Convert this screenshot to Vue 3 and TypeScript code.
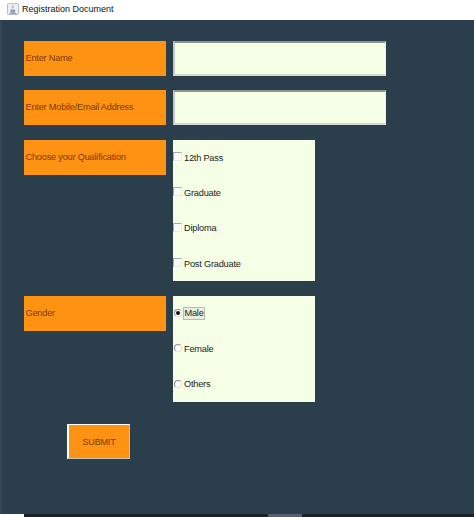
<script setup lang="ts">
const qualifications: string[] = ['12th Pass', 'Graduate', 'Diploma', 'Post Graduate']
const genders: string[] = ['Male', 'Female', 'Others']
</script>

<template>
  <div class="window">
    <header class="titlebar">
      <svg class="app-icon" width="12" height="12" viewBox="0 0 14 14">
        <rect x="0.5" y="0.5" width="13" height="13" rx="1.5" fill="#eceef2" stroke="#a9adb5" />
        <path d="M3 11.5h8v1H3z" fill="#7d8fb0" />
        <path d="M4 7.5h5.5v3a1 1 0 0 1-1 1H5a1 1 0 0 1-1-1z" fill="#8d9dbb" />
        <path d="M6.8 2.5c1 1.3-.9 2 .1 3.6" fill="none" stroke="#c9743a" stroke-width="1" />
      </svg>
      <span class="title">Registration Document</span>
    </header>

    <main class="content">
      <div class="row">
        <div class="label">Enter Name</div>
        <div class="input"></div>
      </div>
      <div class="row">
        <div class="label">Enter Mobile/Email Address</div>
        <div class="input"></div>
      </div>
      <div class="row row-qual">
        <div class="label">Choose your Qualification</div>
        <div class="panel panel-check">
          <div v-for="q in qualifications" :key="q" class="option">
            <span class="check"></span>
            <span class="option-text">{{ q }}</span>
          </div>
        </div>
      </div>
      <div class="row row-gender">
        <div class="label">Gender</div>
        <div class="panel panel-radio">
          <div v-for="(g, i) in genders" :key="g" class="option">
            <span class="radio" :class="{ on: i === 0 }"></span>
            <span class="option-text" :class="{ focus: i === 0 }">{{ g }}</span>
          </div>
        </div>
      </div>
      <button class="submit" type="button">SUBMIT</button>
    </main>

    <footer class="taskbar">
      <span class="task-white"></span>
      <span class="task-gray"></span>
    </footer>
  </div>
</template>

<style>
html, body { margin: 0; background: #2a3e4b; }
</style>

<style scoped>
.window {
  width: 474px;
  height: 517px;
  display: flex;
  flex-direction: column;
  overflow: hidden;
  font-family: "Liberation Sans", Arial, sans-serif;
}
.titlebar {
  height: 20px;
  flex: none;
  background: #fff;
  display: flex;
  align-items: center;
  padding-left: 7px;
  gap: 3px;
  box-sizing: border-box;
}
.app-icon { flex: none; margin-top: -2px; }
.title {
  font-size: 9px;
  color: #111;
  margin-top: -2px;
}
.content {
  flex: 1;
  min-height: 0;
  background: #2a3e4b;
  border-left: 2px solid #33475a;
  box-sizing: border-box;
  padding: 21px 0 0 22px;
  display: flex;
  flex-direction: column;
  align-items: flex-start;
}
.row {
  display: flex;
  align-items: flex-start;
  gap: 7px;
  margin-bottom: 14px;
}
.row-qual { margin-top: 1px; margin-bottom: 15px; }
.row-gender { margin-bottom: 22px; }
.label {
  width: 142px;
  height: 35px;
  background: #fe9212;
  color: #7a3c08;
  font-size: 9.2px;
  letter-spacing: -0.2px;
  line-height: 35px;
  padding-left: 1.5px;
  box-sizing: border-box;
  white-space: nowrap;
}
.input {
  width: 213px;
  height: 35px;
  box-sizing: border-box;
  background: #f4ffe6;
  border-top: 2px solid #8b9593;
  border-left: 2px solid #c2c9c8;
  border-right: 1px solid #eef3e6;
  border-bottom: 2px solid #d6dad6;
}
.panel {
  width: 142px;
  background: #f4ffe6;
}
.panel-check { height: 141px; }
.panel-radio { height: 106px; }
.option {
  display: flex;
  align-items: center;
  height: 35.3px;
  font-size: 9.2px;
  letter-spacing: -0.2px;
  color: #1c1c1c;
}
.check {
  width: 9px;
  height: 9px;
  flex: none;
  box-sizing: border-box;
  background: #fafafa;
  border: 1px solid #a8aab0;
  border-right-color: #ececec;
  border-bottom-color: #ececec;
  margin-top: -2px;
}
.option-text { margin-left: 1px; white-space: nowrap; }
.panel-check .option-text { margin-left: 2px; }
.radio {
  width: 8px;
  height: 8px;
  flex: none;
  box-sizing: border-box;
  margin: -1px 1px 0 1px;
  border-radius: 50%;
  background: #fff;
  border: 1px solid #8a8d92;
  border-right-color: #dde0dc;
  border-bottom-color: #dde0dc;
  position: relative;
}
.radio.on::after {
  content: "";
  position: absolute;
  left: 1px;
  top: 1px;
  width: 4px;
  height: 4px;
  border-radius: 50%;
  background: #111;
}
.option-text.focus {
  margin-left: 0;
  padding: 1px 0.5px;
  border: 1px solid #b9bdb0;
  background: #e9eee0;
  line-height: 9px;
}
.submit {
  width: 63px;
  height: 35px;
  margin: 0 0 0 43px;
  padding: 0;
  background: #fe9212;
  color: #7a3c08;
  font: 9px "Liberation Sans", Arial, sans-serif;
  letter-spacing: -0.15px;
  border-top: 1px solid #fff;
  border-left: 2px solid #fff;
  border-right: 1px solid #c8c4b8;
  border-bottom: 1px solid #c8c4b8;
  box-sizing: border-box;
}
.taskbar {
  height: 3px;
  flex: none;
  background: #1c2228;
  display: flex;
}
.task-white { width: 24px; background: #fff; }
.task-gray { width: 34px; margin-left: 244px; background: #5a6068; }
</style>
